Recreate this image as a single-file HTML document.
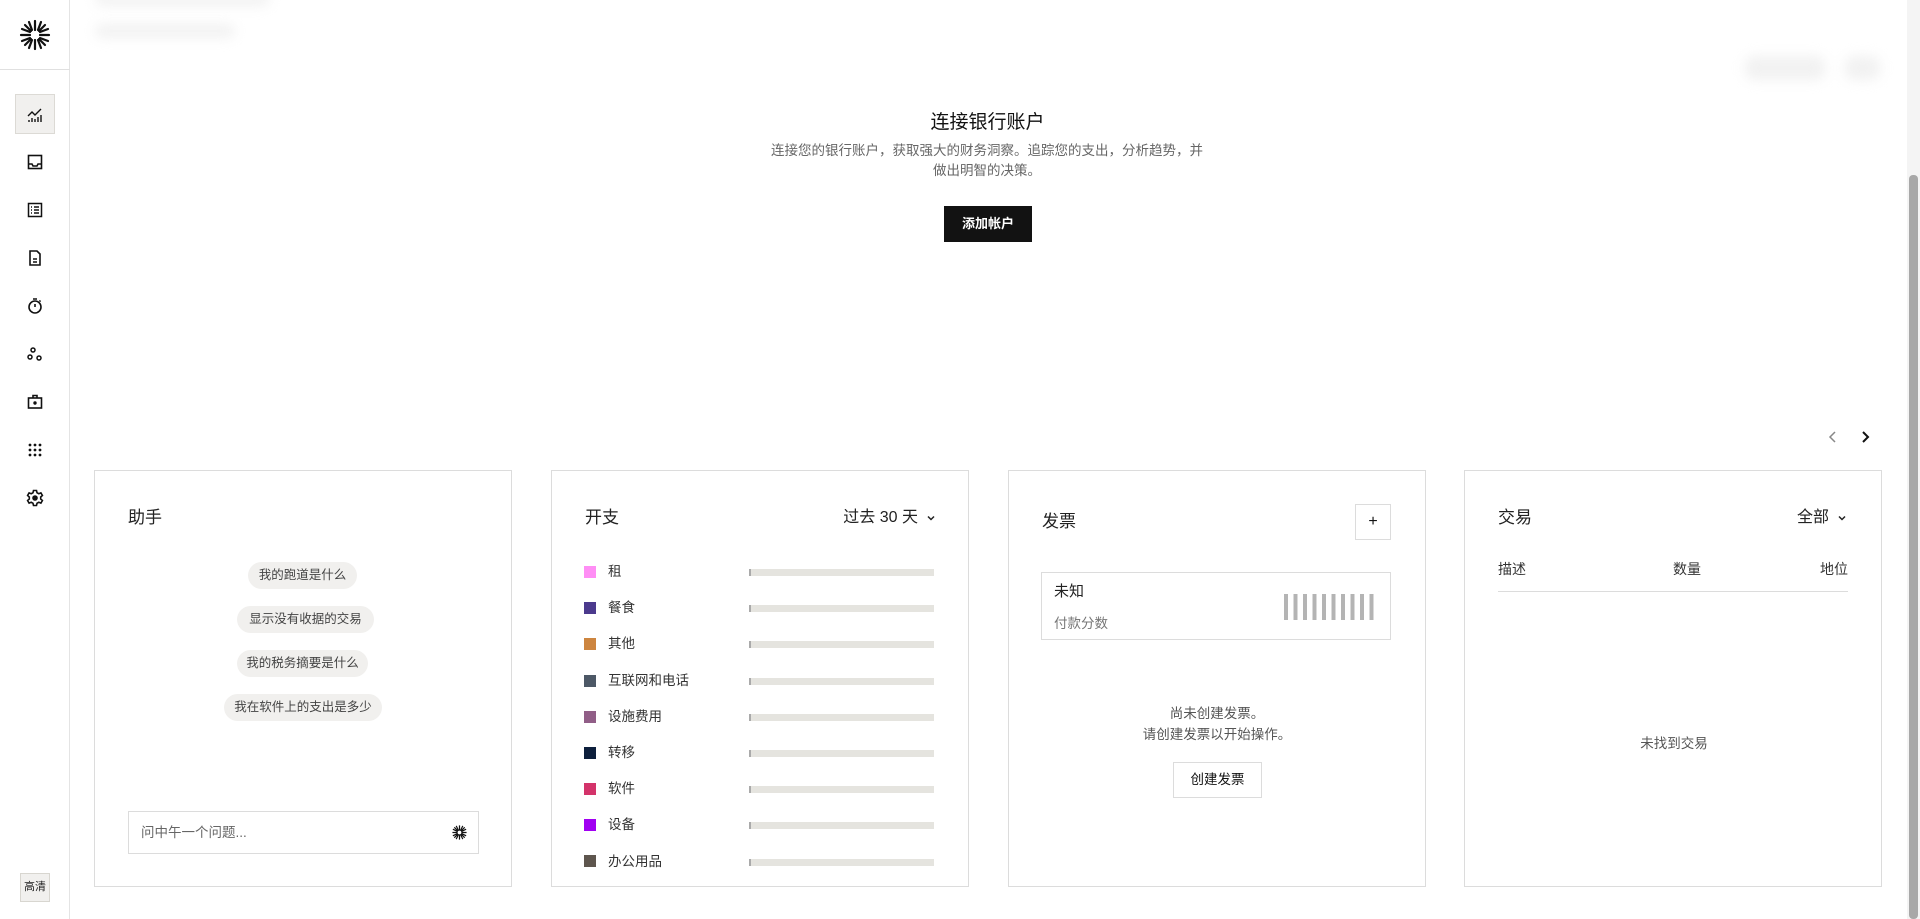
<!DOCTYPE html>
<html><head><meta charset="utf-8"><style>
*{box-sizing:border-box;margin:0;padding:0}
body{width:1920px;height:919px;overflow:hidden;background:#fff;font-family:"Liberation Sans","Noto Sans CJK SC",sans-serif;color:#121212;position:relative}
.abs{position:absolute}
.side{left:0;top:0;width:70px;height:919px;border-right:1px solid #e4e4e4}
.ic{position:absolute;left:25px;width:20px;height:20px}
.card{position:absolute;top:470px;width:418px;height:417px;border:1px solid #dcdcdc;background:#fff}
.ttl{position:absolute;font-size:17px;color:#222}
.chip{position:absolute;height:27px;line-height:27px;border-radius:14px;background:#f1f0ee;font-size:12.5px;color:#444;text-align:center}
.blur{position:absolute;background:#e9e9e9;filter:blur(6px);opacity:.6;border-radius:8px}
.chev{display:inline-block;vertical-align:middle;margin-left:8px}
</style></head><body>
<div class="abs side">
  <svg class="abs" style="left:17px;top:17px" width="36" height="36" viewBox="0 0 36 36"><g stroke="#111" stroke-width="2.2" stroke-linecap="round" fill="none">
  <path d="M18 4v9M18 23v9M4 18h9M23 18h9M8 8l6 6M22 22l6 6M28 8l-6 6M14 22l-6 6M12 5l3 8M21 23l3 8M5 24l8-3M23 15l8-3M24 5l-3 8M15 23l-3 8M5 12l8 3M23 21l8 3"/></g><circle cx="18" cy="18" r="3" fill="#fff"/></svg>
  <div class="abs" style="left:0;top:69px;width:70px;height:1px;background:#e0e0e0"></div>
  <div class="abs" style="left:15px;top:94px;width:40px;height:40px;background:#f1f0ee;border:1px solid #dcdad5"></div>
  <svg class="ic" style="top:105px" viewBox="0 0 20 20" fill="none" stroke="#111" stroke-width="1.4"><path d="M3 11l4-4 3 3 6-6M4 17v-2M7 17v-4M10 17v-3M13 17v-5M16 17v-7"/></svg>
  <svg class="ic" style="top:152px" viewBox="0 0 20 20" fill="none" stroke="#111" stroke-width="1.6"><rect x="3.5" y="3.5" width="13" height="13"/><path d="M3.5 12h3.5l1 2h4l1-2h3.5"/></svg>
  <svg class="ic" style="top:200px" viewBox="0 0 20 20" fill="none" stroke="#111" stroke-width="1.5"><rect x="3.5" y="3.5" width="13" height="13"/><path d="M6 7h1M9 7h5M6 10h1M9 10h5M6 13h1M9 13h5"/></svg>
  <svg class="ic" style="top:248px" viewBox="0 0 20 20" fill="none" stroke="#111" stroke-width="1.6"><path d="M5 3h7l3 3v11H5z M8 11h4M8 14h4"/></svg>
  <svg class="ic" style="top:296px" viewBox="0 0 20 20" fill="none" stroke="#111" stroke-width="1.6"><circle cx="10" cy="11" r="6"/><path d="M8 3h4M10 8v3M14.5 5.5l1-1"/></svg>
  <svg class="ic" style="top:344px" viewBox="0 0 20 20" fill="none" stroke="#111" stroke-width="1.5"><circle cx="8" cy="6" r="2"/><circle cx="5" cy="13" r="2"/><circle cx="14" cy="14" r="2"/></svg>
  <svg class="ic" style="top:392px" viewBox="0 0 20 20" fill="none" stroke="#111" stroke-width="1.6"><rect x="3.5" y="6" width="13" height="10"/><path d="M8 6V3.5h4V6"/><circle cx="10" cy="11" r=".9" fill="#111"/></svg>
  <svg class="ic" style="top:440px" viewBox="0 0 20 20" fill="#111"><circle cx="5" cy="5" r="1.4"/><circle cx="10" cy="5" r="1.4"/><circle cx="15" cy="5" r="1.4"/><circle cx="5" cy="10" r="1.4"/><circle cx="10" cy="10" r="1.4"/><circle cx="15" cy="10" r="1.4"/><circle cx="5" cy="15" r="1.4"/><circle cx="10" cy="15" r="1.4"/><circle cx="15" cy="15" r="1.4"/></svg>
  <svg class="ic" style="top:488px" viewBox="0 0 20 20" fill="none" stroke="#111" stroke-width="1.6"><path d="M8.5 2.5h3l.5 2.2 1.8 1 2.1-.8 1.5 2.6-1.7 1.5v2l1.7 1.5-1.5 2.6-2.1-.8-1.8 1-.5 2.2h-3l-.5-2.2-1.8-1-2.1.8-1.5-2.6 1.7-1.5v-2L2.6 7.5l1.5-2.6 2.1.8 1.8-1z"/><circle cx="10" cy="10" r="2" fill="#111"/></svg>
  <div class="abs" style="left:20px;top:873px;width:30px;height:29px;background:#f1f0ee;border:1px solid #d8d6d0;font-size:11px;line-height:27px;text-align:center;color:#222">高清</div>
</div>

<div class="blur" style="left:95px;top:-8px;width:175px;height:14px"></div>
<div class="blur" style="left:95px;top:24px;width:140px;height:14px"></div>
<div class="blur" style="left:1745px;top:56px;width:80px;height:24px"></div>
<div class="blur" style="left:1845px;top:56px;width:35px;height:24px"></div>

<div class="abs" style="left:0;width:1975px;top:107px;text-align:center;font-size:19px;color:#111">连接银行账户</div>
<div class="abs" style="left:762px;width:450px;top:141px;text-align:center;font-size:13.5px;line-height:20px;color:#666">连接您的银行账户，获取强大的财务洞察。追踪您的支出，分析趋势，并<br>做出明智的决策。</div>
<div class="abs" style="left:944px;top:206px;width:88px;height:36px;background:#121212;color:#fff;font-size:13px;font-weight:bold;line-height:36px;text-align:center">添加帐户</div>

<svg class="abs" style="left:1826px;top:430px" width="14" height="14" viewBox="0 0 14 14" fill="none" stroke="#888" stroke-width="1.5"><path d="M9 2L4 7l5 5"/></svg>
<svg class="abs" style="left:1858px;top:430px" width="14" height="14" viewBox="0 0 14 14" fill="none" stroke="#111" stroke-width="2"><path d="M5 2l5 5-5 5"/></svg>

<!-- Assistant -->
<div class="card" style="left:94px">
  <div class="ttl" style="left:33px;top:32px">助手</div>
  <div class="chip" style="left:153px;top:91px;width:109px">我的跑道是什么</div>
  <div class="chip" style="left:142px;top:135px;width:137px">显示没有收据的交易</div>
  <div class="chip" style="left:142px;top:179px;width:131px">我的税务摘要是什么</div>
  <div class="chip" style="left:129px;top:223px;width:158px">我在软件上的支出是多少</div>
  <div class="abs" style="left:33px;top:340px;width:351px;height:43px;border:1px solid #dcdcdc;font-size:13.5px;color:#666;line-height:41px;padding-left:12px">问中午一个问题...
    <svg class="abs" style="right:10px;top:12px" width="17" height="17" viewBox="0 0 36 36"><g stroke="#111" stroke-width="2.6" fill="none"><path d="M18 3v30M3 18h30M7 7l22 22M29 7L7 29M11 4l14 28M25 4L11 32M4 11l28 14M4 25l28-14"/></g><circle cx="18" cy="18" r="4" fill="#fff"/></svg>
  </div>
</div>

<!-- Spending -->
<div class="card" style="left:551px">
  <div class="ttl" style="left:33px;top:32px">开支</div>
  <div class="abs" style="right:32px;top:32px;font-size:16px;color:#222">过去 30 天<svg class="chev" width="10" height="10" viewBox="0 0 10 10" fill="none" stroke="#222" stroke-width="1.5"><path d="M2 3.5l3 3 3-3"/></svg></div>
</div>
<div class="abs" style="left:584px;top:566px;width:12px;height:12px;background:#ff8ef5"></div>
<div class="abs" style="left:584px;top:602px;width:12px;height:12px;background:#4b3a8d"></div>
<div class="abs" style="left:584px;top:638px;width:12px;height:12px;background:#cd853f"></div>
<div class="abs" style="left:584px;top:675px;width:12px;height:12px;background:#4d5866"></div>
<div class="abs" style="left:584px;top:711px;width:12px;height:12px;background:#915e87"></div>
<div class="abs" style="left:584px;top:747px;width:12px;height:12px;background:#0d1f3c"></div>
<div class="abs" style="left:584px;top:783px;width:12px;height:12px;background:#d3336a"></div>
<div class="abs" style="left:584px;top:819px;width:12px;height:12px;background:#a100f2"></div>
<div class="abs" style="left:584px;top:855px;width:12px;height:12px;background:#5e564e"></div>
<div class="abs" style="left:608px;top:554px;font-size:13.5px;color:#333;line-height:36.2px">租<br>餐食<br>其他<br>互联网和电话<br>设施费用<br>转移<br>软件<br>设备<br>办公用品</div>
<div class="abs" style="left:749px;top:569px">
  <div style="width:185px;height:7px;background:#e5e4df;border-left:2px solid #aaa;margin-bottom:29.2px"></div>
  <div style="width:185px;height:7px;background:#e5e4df;border-left:2px solid #aaa;margin-bottom:29.2px"></div>
  <div style="width:185px;height:7px;background:#e5e4df;border-left:2px solid #aaa;margin-bottom:29.2px"></div>
  <div style="width:185px;height:7px;background:#e5e4df;border-left:2px solid #aaa;margin-bottom:29.2px"></div>
  <div style="width:185px;height:7px;background:#e5e4df;border-left:2px solid #aaa;margin-bottom:29.2px"></div>
  <div style="width:185px;height:7px;background:#e5e4df;border-left:2px solid #aaa;margin-bottom:29.2px"></div>
  <div style="width:185px;height:7px;background:#e5e4df;border-left:2px solid #aaa;margin-bottom:29.2px"></div>
  <div style="width:185px;height:7px;background:#e5e4df;border-left:2px solid #aaa;margin-bottom:29.2px"></div>
  <div style="width:185px;height:7px;background:#e5e4df;border-left:2px solid #aaa"></div>
</div>

<!-- Invoice -->
<div class="card" style="left:1008px">
  <div class="ttl" style="left:33px;top:36px">发票</div>
  <div class="abs" style="left:346px;top:33px;width:36px;height:36px;border:1px solid #dcdcdc;text-align:center;line-height:34px;font-size:16px">+</div>
  <div class="abs" style="left:32px;top:101px;width:350px;height:68px;border:1px solid #dcdcdc">
    <div class="abs" style="left:12px;top:7px;font-size:15px;color:#222">未知</div>
    <div class="abs" style="left:12px;top:39px;font-size:13.5px;color:#777">付款分数</div>
    <div class="abs" style="left:242px;top:21px;width:95px;height:26px;background:repeating-linear-gradient(90deg,#b4b4b4 0 4px,transparent 4px 9.5px)"></div>
  </div>
  <div class="abs" style="left:0;width:416px;top:232px;text-align:center;font-size:13.5px;line-height:21px;color:#555">尚未创建发票。<br>请创建发票以开始操作。</div>
  <div class="abs" style="left:164px;top:291px;width:89px;height:36px;border:1px solid #dcdcdc;text-align:center;line-height:34px;font-size:13.5px">创建发票</div>
</div>

<!-- Transactions -->
<div class="card" style="left:1464px">
  <div class="ttl" style="left:33px;top:32px">交易</div>
  <div class="abs" style="right:34px;top:32px;font-size:16px;color:#222">全部<svg class="chev" width="10" height="10" viewBox="0 0 10 10" fill="none" stroke="#222" stroke-width="1.5"><path d="M2 3.5l3 3 3-3"/></svg></div>
  <div class="abs" style="left:33px;top:88px;font-size:14px;color:#333">描述</div>
  <div class="abs" style="left:208px;top:88px;font-size:14px;color:#333">数量</div>
  <div class="abs" style="right:33px;top:88px;font-size:14px;color:#333">地位</div>
  <div class="abs" style="left:33px;top:120px;width:350px;height:1px;background:#dcdcdc"></div>
  <div class="abs" style="left:0;width:418px;top:261px;text-align:center;font-size:13.5px;color:#555">未找到交易</div>
</div>

<div class="abs" style="left:1907px;top:0;width:13px;height:919px;background:#f4f4f4"></div>
<div class="abs" style="left:1909px;top:175px;width:9px;height:744px;background:#a8a8a8;border-radius:4px"></div>
</body></html>
